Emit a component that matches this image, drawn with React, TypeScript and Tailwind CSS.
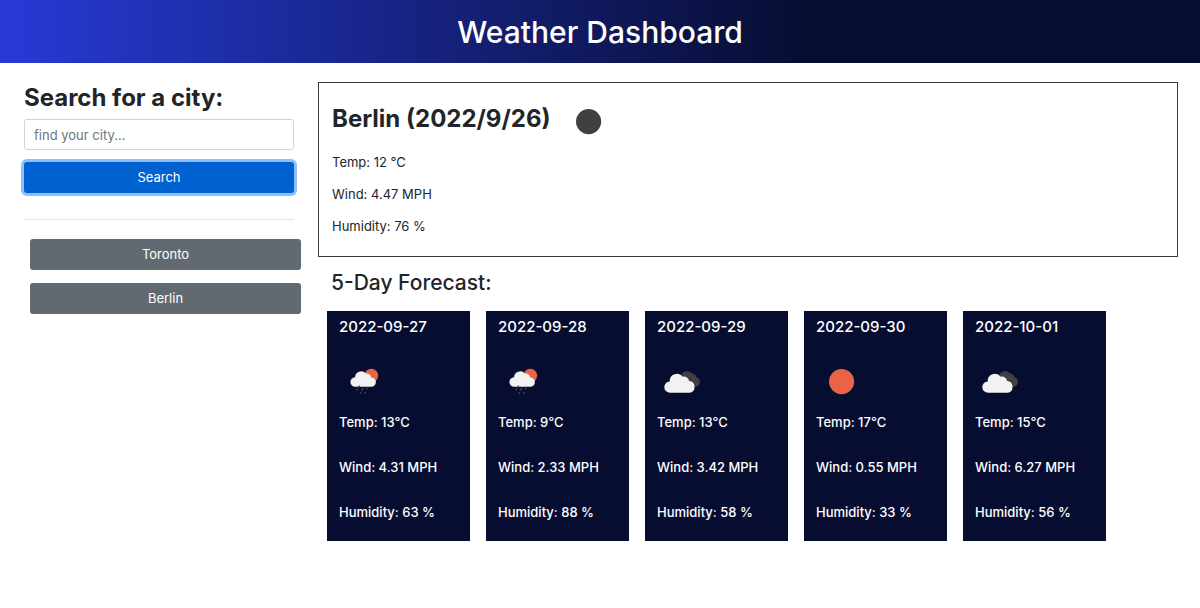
import { useState } from "react";
import type { FormEvent } from "react";

type IconKind = "rain" | "clouds" | "clear-day" | "clear-night";

interface Day {
  date: string;
  icon: IconKind;
  temp: number;
  wind: string;
  humidity: number;
}

const forecast: Day[] = [
  { date: "2022-09-27", icon: "rain", temp: 13, wind: "4.31", humidity: 63 },
  { date: "2022-09-28", icon: "rain", temp: 9, wind: "2.33", humidity: 88 },
  { date: "2022-09-29", icon: "clouds", temp: 13, wind: "3.42", humidity: 58 },
  { date: "2022-09-30", icon: "clear-day", temp: 17, wind: "0.55", humidity: 33 },
  { date: "2022-10-01", icon: "clouds", temp: 15, wind: "6.27", humidity: 56 },
];

const cities = ["Toronto", "Berlin"];

function WeatherIcon({ kind }: { kind: IconKind }) {
  return (
    <svg viewBox="0 0 50 50" className="size-[50px] shrink-0" aria-hidden="true">
      {kind === "clear-night" && <circle cx="25.6" cy="24.6" r="12.6" fill="#404042" />}
      {kind === "clear-day" && <circle cx="25.6" cy="24.6" r="12.6" fill="#ea6347" />}
      {kind === "rain" && (
        <>
          <circle cx="32.3" cy="18.6" r="6.9" fill="#ea6347" />
          <path
            d="M16.4 29.8a4.8 4.8 0 0 1-.4-9.6 6.2 6.2 0 0 1 10.9-3.6 4.2 4.2 0 0 1 5.1 3.7 5 5 0 0 1 4.9 5 4.6 4.6 0 0 1-4.6 4.5z"
            fill="#f2f2f2"
          />
          <path
            d="M20.3 28.6v1.8M18.6 31.6l-.8 2M23.4 31.4l-.8 2M28.4 30.8l-1.4 1.2M21.8 35l-.8 1.8M26.4 35l-.8 1.8M23.4 31.4l1-.6"
            stroke="#45464a"
            strokeWidth="1.4"
            fill="none"
          />
        </>
      )}
      {kind === "clouds" && (
        <>
          <path
            d="M24 19a6.4 6.4 0 0 1 11.2-2.4 4 4 0 0 1 3.8 3.4 5 5 0 0 1 .2 9.7h-10z"
            fill="#404042"
          />
          <path
            d="M13.3 35.8a5.7 5.7 0 0 1-.6-11.4 7.2 7.2 0 0 1 13-4.6 5 5 0 0 1 6.4 4.2 6 6 0 0 1 .9 11.8z"
            fill="#f2f2f2"
          />
        </>
      )}
    </svg>
  );
}

function ForecastCard({ day }: { day: Day }) {
  return (
    <li className="flex h-[230px] w-[143px] flex-col bg-[#070d31] px-3 pt-1 text-[13px] leading-5 font-medium text-white">
      <h3 className="text-[15px] leading-6 font-medium">{day.date}</h3>
      <div className="mt-[18px]">
        <WeatherIcon kind={day.icon} />
      </div>
      <p className="mt-[5px]">Temp: {day.temp}°C</p>
      <p className="mt-[25px]">Wind: {day.wind} MPH</p>
      <p className="mt-[25px]">Humidity: {day.humidity} %</p>
    </li>
  );
}

export default function App() {
  const [query, setQuery] = useState("");
  const [city, setCity] = useState("Berlin");

  const search = (event: FormEvent) => {
    event.preventDefault();
    if (query.trim()) setCity(query.trim());
  };

  return (
    <div className="min-h-screen bg-white font-['Inter',sans-serif] text-[13px] text-[#212529]">
      <header className="bg-[linear-gradient(90deg,#273ad6_0%,#070d31_67%)] px-4 pt-2 pb-[7px] text-center text-white">
        <h1 className="text-[30px] leading-[48px] font-medium">Weather Dashboard</h1>
      </header>

      <div className="flex pr-[22px] pl-6">
        <aside className="w-[294px] shrink-0 pt-[19px] pr-6">
          <form onSubmit={search}>
            <label htmlFor="city" className="block text-2xl leading-8 font-bold">
              Search for a city:
            </label>
            <input
              id="city"
              type="text"
              value={query}
              onChange={(event) => setQuery(event.target.value)}
              placeholder="find your city..."
              className="mt-[5px] block h-[31px] w-full rounded-[3px] border border-[#ced4da] px-[9px] placeholder:text-[#6c757d]"
            />
            <button
              type="submit"
              className="mt-3 block h-[31px] w-full rounded-[3px] bg-[#0062d1] text-white ring-[3px] ring-[#8ebff9] outline-none"
            >
              Search
            </button>
          </form>
          <hr className="mt-[26px] border-[#e3e4e5]" />
          <div className="mt-[19px] -mr-[7px] flex flex-col gap-[13px] pl-[6px]">
            {cities.map((name) => (
              <button
                key={name}
                type="button"
                onClick={() => setCity(name)}
                className="h-[31px] rounded-[3px] bg-[#616a71] text-white"
              >
                {name}
              </button>
            ))}
          </div>
        </aside>

        <main className="min-w-0 flex-1 pt-[19px]">
          <section className="border border-[#343a40] px-[13px] pt-[11px] pb-5">
            <div className="flex items-start gap-3">
              <h2 className="text-2xl leading-[50px] font-bold">{city} (2022/9/26)</h2>
              <div className="pt-[3px]">
                <WeatherIcon kind="clear-night" />
              </div>
            </div>
            <div className="mt-[5px] flex flex-col gap-3 leading-5">
              <p>Temp: 12 °C</p>
              <p>Wind: 4.47 MPH</p>
              <p>Humidity: 76 %</p>
            </div>
          </section>

          <h2 className="mt-3 pl-[13px] text-[21px] leading-7 font-medium">5-Day Forecast:</h2>
          <ul className="mt-[14px] flex flex-wrap gap-4 pl-[9px]">
            {forecast.map((day) => (
              <ForecastCard key={day.date} day={day} />
            ))}
          </ul>
        </main>
      </div>
    </div>
  );
}
